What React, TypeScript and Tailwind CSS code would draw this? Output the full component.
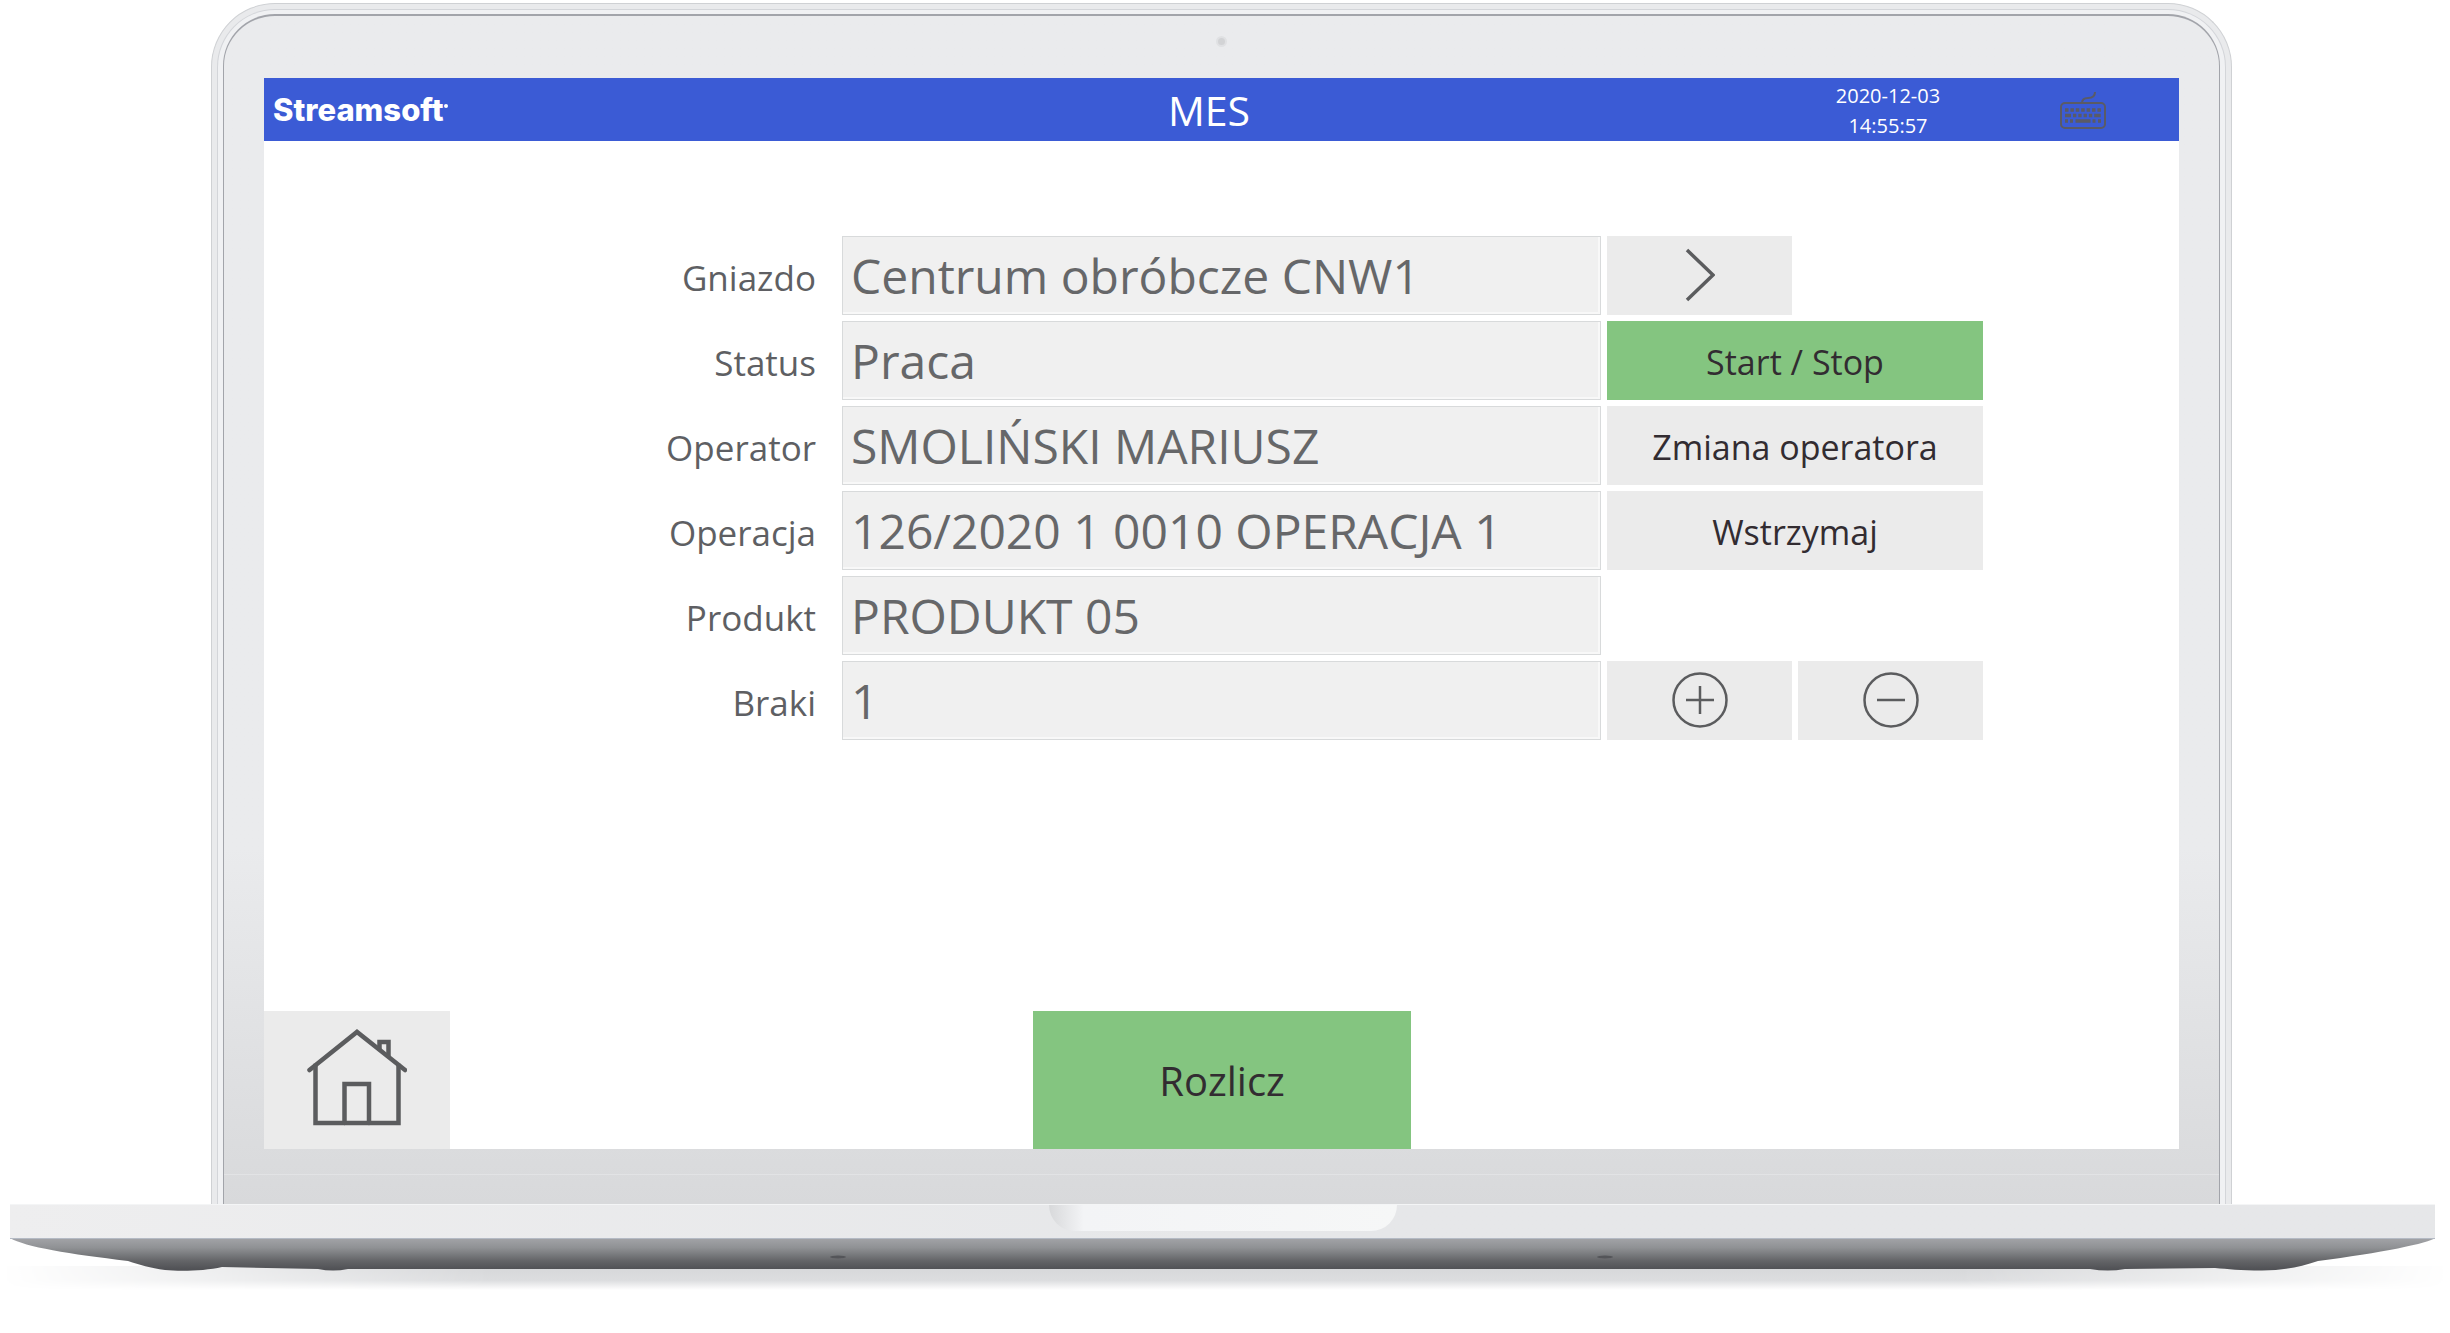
import { useState, type ReactNode } from "react";

const fieldClass =
  "h-[79px] w-full min-w-0 border border-[#d8dadb] bg-[#f0f0f0] px-2 text-[48px] leading-[60px] text-[#666769] shadow-[inset_-2px_-2px_0_#f8f8f8] outline-none";
const labelClass = "pr-5 pt-1 text-right text-[35px] leading-[44px] text-[#5e5f63]";
const grayButton =
  "flex h-[79px] items-center justify-center bg-[#ebebeb] pt-0.5 text-[34px] leading-[44px] text-[#322c31]";
const greenButton =
  "flex h-[79px] items-center justify-center bg-[#84c580] pt-0.5 text-[34px] leading-[44px] text-[#322c31]";
const iconButton = "flex h-[79px] items-center justify-center bg-[#ebebeb] pb-0.5";

function Row({ id, label, value, children }: { id: string; label: string; value: string | number; children?: ReactNode }) {
  return (
    <div className="grid grid-cols-[572fr_759fr_185fr_185fr_190fr] items-center gap-x-[6px]">
      <label htmlFor={id} className={labelClass}>
        {label}
      </label>
      <input id={id} className={fieldClass} value={value} readOnly />
      {children}
    </div>
  );
}

function KeyboardIcon() {
  return (
    <svg viewBox="0 0 46 38" className="h-[38px] w-[46px]" fill="none" stroke="#5a5b66" strokeWidth="2">
      <rect x="1" y="12" width="44" height="25" rx="4" />
      <path d="M22 12c0-4 2-5 6-5s7-1 7-6" />
      <path d="M5 19h36" strokeWidth="3.500" strokeDasharray="3.500 1.900" />
      <path d="M5 24.500h36" strokeWidth="3.500" strokeDasharray="6 2 3.300 2 3.300 2 3.300 2 3.300 2 6.500" />
      <path d="M5 30h3M10 30h3M15.500 30h15M32.500 30h3M38 30h3" strokeWidth="3.500" />
    </svg>
  );
}

function HomeIcon() {
  return (
    <svg viewBox="0 0 100 98" className="h-[98px] w-[100px]" fill="none" stroke="#5b5c5e" strokeWidth="4.500" strokeLinecap="round">
      <path d="M2.500 41 50 3l48 38" />
      <path d="M8.500 37v57h83V37" strokeLinecap="square" />
      <path d="M37.500 94V55H62v39" />
      <path d="M72.500 20v-7h9v14" />
    </svg>
  );
}

function Underside() {
  return (
    <svg viewBox="0 0 2450 60" preserveAspectRatio="none" className="block h-[60px] w-full" aria-hidden="true">
      <defs>
        <linearGradient id="under" x1="0" y1="0" x2="0" y2="1">
          <stop offset="0" stopColor="#a3a4a8" />
          <stop offset="0.300" stopColor="#8f9194" />
          <stop offset="0.700" stopColor="#636467" />
          <stop offset="1" stopColor="#4d4e52" />
        </linearGradient>
        <linearGradient id="shade" x1="0" y1="0" x2="0" y2="1">
          <stop offset="0" stopColor="#d6d7d9" />
          <stop offset="0.600" stopColor="#dcdddf" />
          <stop offset="1" stopColor="#ffffff" />
        </linearGradient>
        <linearGradient id="fade" x1="0" y1="0" x2="1" y2="0">
          <stop offset="0" stopColor="#fff" stopOpacity="0" />
          <stop offset="0.200" stopColor="#fff" />
          <stop offset="0.800" stopColor="#fff" />
          <stop offset="1" stopColor="#fff" stopOpacity="0" />
        </linearGradient>
        <mask id="shadeMask">
          <rect width="2450" height="60" fill="url(#fade)" />
        </mask>
      </defs>
      <rect y="28" width="2450" height="24" fill="url(#shade)" mask="url(#shadeMask)" />
      <path
        d="M10 0H2435C2430 5 2380 15 2318 23C2300 29 2285 32 2262 32.500C2240 32.500 2228 31 2215 30L2125 31Q2108 34 2090 31H348Q333 34 318 31L222 29C205 33 180 33.500 165 32C150 30 140 27 128 23C70 16 25 9 10 0Z"
        fill="url(#under)"
      />
      <rect x="10" width="2425" height="1" fill="#b4bac4" />
      <ellipse cx="838" cy="19" rx="8" ry="1.500" fill="#545559" />
      <ellipse cx="1605" cy="19" rx="8" ry="1.500" fill="#545559" />
    </svg>
  );
}

export default function App() {
  const [scrap, setScrap] = useState(1);
  return (
    <main className="min-h-screen overflow-hidden bg-white pt-[3px] font-['Open_Sans','Noto_Sans',sans-serif]">
      <div className="ml-[211px] mr-[218px] rounded-t-[64px] border border-b-0 border-[#cfd1d4] bg-[#e9eaec] px-[5px] pt-[5px]">
        <div className="rounded-t-[58px] border border-b-0 border-[#d3d5d9] bg-[#f0f1f3] px-[5px] pt-[4px]">
          <div className="rounded-t-[52px] border-x border-t-2 border-[#a2a4aa] bg-linear-to-b from-[#eaebed] from-70% to-[#d8d9db]">
            <div className="flex h-[62px] items-start justify-center pt-[20px]">
              <span className="size-[11px] rounded-full border-2 border-[#e0e1e3] bg-[#d2d3d5]" />
            </div>

            <div className="mx-[40px] flex flex-col bg-white">
              <header className="grid h-[63px] grid-cols-[782fr_326fr_362fr_445fr] items-center bg-[#3b5bd5] text-white">
                <div className="flex items-center pl-[9px]">
                  <span className="font-[Inter] text-[31px] leading-[36px] font-extrabold">Streamsoft</span>
                  <span className="mb-2 size-1 rounded-full bg-white" />
                </div>
                <h1 className="text-center text-[41px] leading-[50px]">MES</h1>
                <span />
                <div className="grid grid-cols-[308fr_82fr_55fr] items-center">
                  <p className="pt-0.5 text-center text-[20px] leading-[30px]">
                    2020-12-03
                    <br />
                    14:55:57
                  </p>
                  <button type="button" aria-label="Klawiatura" className="flex justify-center">
                    <KeyboardIcon />
                  </button>
                </div>
              </header>

              <section className="flex flex-col gap-[6px] pt-[95px]">
                <Row id="gniazdo" label="Gniazdo" value="Centrum obróbcze CNW1">
                  <button type="button" aria-label="Dalej" className={iconButton}>
                    <svg viewBox="0 0 30 54" className="h-[54px] w-[30px]" fill="none" stroke="#5b5c5e" strokeWidth="3.500">
                      <path d="M2 2 28 27 2 52" />
                    </svg>
                  </button>
                </Row>
                <Row id="status" label="Status" value="Praca">
                  <button type="button" className={`col-span-2 ${greenButton}`}>Start / Stop</button>
                </Row>
                <Row id="operator" label="Operator" value="SMOLIŃSKI MARIUSZ">
                  <button type="button" className={`col-span-2 ${grayButton}`}>Zmiana operatora</button>
                </Row>
                <Row id="operacja" label="Operacja" value="126/2020 1 0010 OPERACJA 1">
                  <button type="button" className={`col-span-2 ${grayButton}`}>Wstrzymaj</button>
                </Row>
                <Row id="produkt" label="Produkt" value="PRODUKT 05" />
                <Row id="braki" label="Braki" value={scrap}>
                  <button type="button" aria-label="Dodaj brak" className={iconButton} onClick={() => setScrap(scrap + 1)}>
                    <svg viewBox="0 0 56 56" className="size-[56px]" fill="none" stroke="#5b5c5e" strokeWidth="2.500">
                      <circle cx="28" cy="28" r="26.500" />
                      <path d="M14 28h28M28 14v28" />
                    </svg>
                  </button>
                  <button type="button" aria-label="Odejmij brak" className={iconButton} onClick={() => setScrap(Math.max(0, scrap - 1))}>
                    <svg viewBox="0 0 56 56" className="size-[56px]" fill="none" stroke="#5b5c5e" strokeWidth="2.500">
                      <circle cx="28" cy="28" r="26.500" />
                      <path d="M14 28h28" />
                    </svg>
                  </button>
                </Row>
              </section>

              <footer className="mt-[271px] grid grid-cols-[186fr_583fr_378fr_768fr]">
                <button type="button" aria-label="Strona główna" className="flex h-[138px] items-center justify-center bg-[#ebebeb] pb-1">
                  <HomeIcon />
                </button>
                <span />
                <button type="button" className="flex h-[138px] items-center justify-center bg-[#84c580] pt-0.5 text-[40px] leading-[48px] text-[#322c31]">
                  Rozlicz
                </button>
              </footer>
            </div>

            <div className="h-[26px] border-b border-[#e2e3e5]" />
            <div className="h-[29px]" />
          </div>
        </div>
      </div>

      <div className="ml-[10px] mr-[15px] flex h-[34px] justify-center border-t border-[#f4f5f6] bg-linear-to-r from-[#eeeeef] via-[#e6e7e9] to-[#e6e7e9]">
        <div className="h-[26px] w-[348px] rounded-b-[26px] bg-linear-to-r from-[#d8d9db] via-[#f3f4f6] via-10% to-[#f6f7f7]" />
      </div>
      <Underside />
    </main>
  );
}
